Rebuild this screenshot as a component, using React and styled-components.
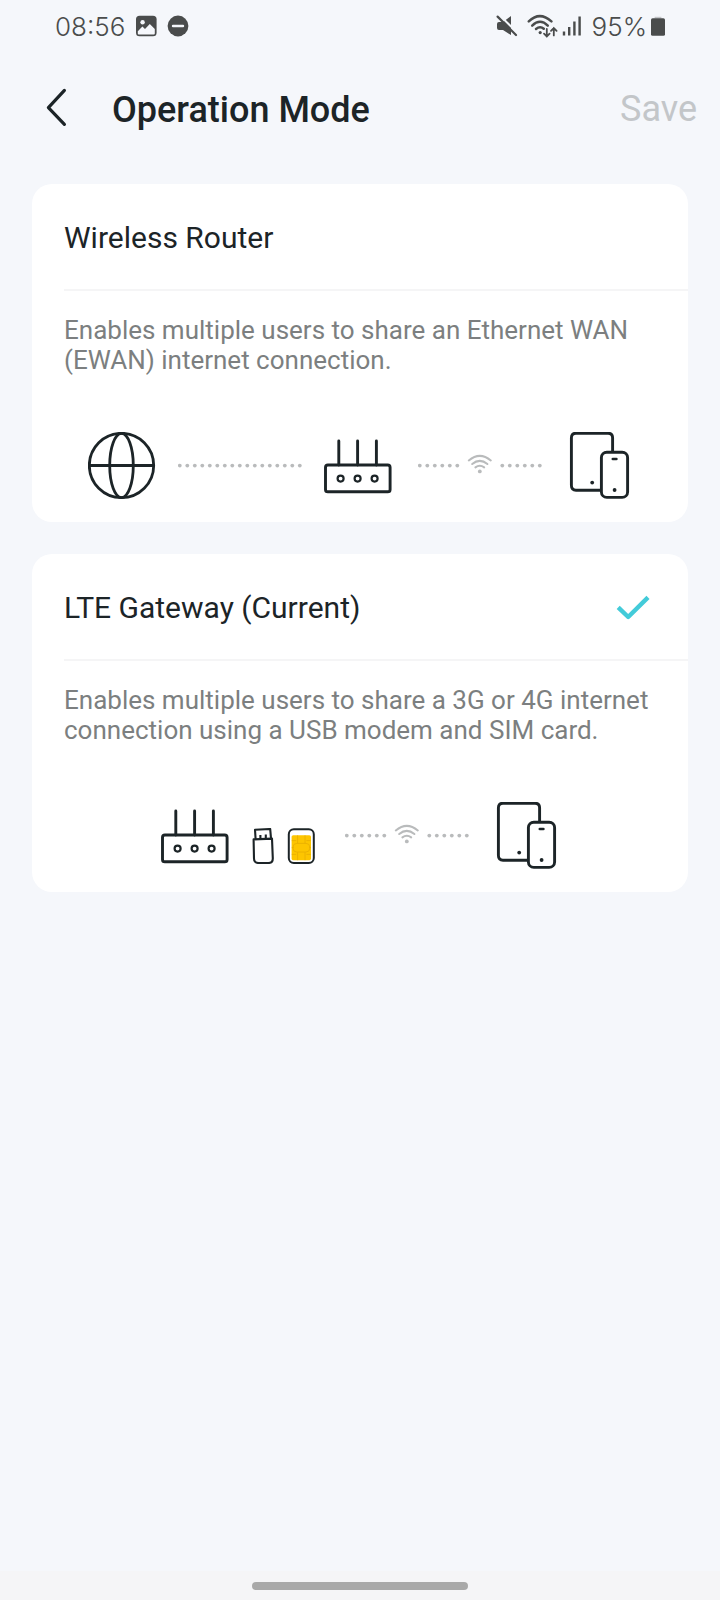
import React from 'react';
import styled, { createGlobalStyle } from 'styled-components';

const GlobalStyle = createGlobalStyle`
  * {
    box-sizing: border-box;
  }

  body {
    margin: 0;
    background: #f5f7fb;
    color: #1c2427;
    font-family: Roboto, "Liberation Sans", sans-serif;
  }

  svg {
    display: block;
    flex-shrink: 0;
  }
`;

const Screen = styled.div`
  display: flex;
  flex-direction: column;
  min-height: 100vh;
`;

const StatusBar = styled.div`
  display: flex;
  justify-content: space-between;
  align-items: center;
  height: 52px;
  padding: 0 54px 0 55px;
  color: #4a4c4c;
  font-family: Inter, Roboto, sans-serif;
  font-size: 26px;
  font-weight: 300;
`;

const StatusGroup = styled.div`
  display: flex;
  align-items: center;
  gap: ${({ $gap }) => $gap}px;
`;

const BatteryLevel = styled.span`
  padding-left: 7px;
`;

const Header = styled.header`
  display: flex;
  align-items: center;
  height: 112px;
  padding: 0 23px 0 40px;
`;

const BackButton = styled.button`
  display: flex;
  align-items: center;
  justify-content: center;
  width: 32px;
  height: 48px;
  padding: 0;
  border: 0;
  background: none;
  color: inherit;
`;

const Title = styled.h1`
  flex: 1;
  margin: 0 0 0 40px;
  padding-top: 4px;
  font-size: 36px;
  line-height: 44px;
  font-weight: 500;
`;

const SaveButton = styled.button`
  padding: 2px 0 0;
  border: 0;
  background: none;
  color: #c3c6c9;
  font-family: inherit;
  font-size: 36px;
  line-height: 44px;
`;

const ModeList = styled.main`
  display: flex;
  flex: 1;
  flex-direction: column;
  gap: 32px;
  padding: 20px 32px;
`;

const Card = styled.section`
  padding-left: 32px;
  border-radius: 20px;
  background: #fff;
`;

const CardHead = styled.div`
  display: flex;
  align-items: center;
  justify-content: space-between;
  height: 107px;
  padding: 2px 38px 0 0;
  border-bottom: 2px solid #f5f5f6;
`;

const ModeName = styled.h2`
  margin: 0;
  font-size: 30px;
  line-height: 36px;
  font-weight: 400;
`;

const Description = styled.p`
  margin: 0;
  padding: 24px 32px 0 0;
  color: #7c7f80;
  font-size: 26px;
  line-height: 30px;
`;

const Diagram = styled.div`
  display: flex;
  align-items: center;
  justify-content: center;
  gap: 22px;
  padding: 57px 32px 22px 0;
`;

const WirelessLink = styled.div`
  padding: 0 5px 0 4px;
`;

const Accessories = styled.div`
  display: flex;
  align-self: flex-end;
  gap: 13px;
  padding: 0 4px 6px 1px;
`;

const NavBar = styled.footer`
  display: flex;
  justify-content: center;
  padding: 11px 0 10px;
  background: #f5f5f7;
`;

const NavHandle = styled.div`
  width: 30%;
  height: 8px;
  border-radius: 4px;
  background: #a9a9a9;
`;

const PictureIcon = () => (
  <svg width="22" height="22" viewBox="0 0 22 22" aria-hidden="true">
    <rect x="1" y="0.7" width="20.6" height="20.6" rx="3.6" fill="currentColor" />
    <circle cx="7.6" cy="7.2" r="2.2" fill="#f5f7fb" />
    <path d="M2.8 16.2 7.4 11.6l2.6 2.4 4.8-5 5 5v4.4q0 1-1 1h-15q-1 0-1-1z" fill="#f5f7fb" />
  </svg>
);

const DoNotDisturbIcon = () => (
  <svg width="22" height="22" viewBox="0 0 22 22" aria-hidden="true">
    <circle cx="11" cy="11" r="10.4" fill="currentColor" />
    <path d="M6 11h10" stroke="#f5f7fb" strokeWidth="2.4" strokeLinecap="round" />
  </svg>
);

const MuteIcon = () => (
  <svg width="28" height="22" viewBox="0 0 28 22" aria-hidden="true">
    <path d="M1 9q0-2 2-2h4l8-6v19l-8-5H3q-2 0-2-2z" fill="currentColor" />
    <path d="M3.4 0 22 18.4" stroke="#f5f7fb" strokeWidth="2" />
    <path d="M1.6 1.6 20 20" stroke="currentColor" strokeWidth="2.2" strokeLinecap="round" />
  </svg>
);

const StatusWifiIcon = () => (
  <svg width="32" height="24" viewBox="0 0 32 24" fill="none" stroke="currentColor" strokeLinecap="round" aria-hidden="true">
    <g strokeWidth="2.5">
      <path d="M1.8 7.4q10.9-10.6 22.6 0" />
      <path d="M5.2 11.6q7.9-7.6 15.6 0" />
      <path d="M9 15q4.1-3.4 7.8-.2" />
    </g>
    <circle cx="13.2" cy="18.6" r="1.6" fill="currentColor" stroke="none" />
    <path d="M19.8 15v7.4m-2.8-2.8 2.8 2.8 2.8-2.8M26.8 21.4v-7.4M24 16.8l2.8-2.8 2.8 2.8" strokeWidth="1.8" />
  </svg>
);

const SignalIcon = () => (
  <svg width="20" height="22" viewBox="0 0 20 22" stroke="currentColor" strokeWidth="2.4" aria-hidden="true">
    <path d="M2 16.6v4M7.2 12v8.6M12.4 6.4v14.2M17.6 1.4v19.2" />
  </svg>
);

const BatteryIcon = () => (
  <svg width="16" height="22" viewBox="0 0 16 22" aria-hidden="true">
    <path d="M4.6 3.4V1.8h6.8v1.6z" fill="#c2c4c7" />
    <rect x="1" y="3.2" width="14" height="17.6" rx="1.6" fill="currentColor" />
  </svg>
);

const ChevronIcon = () => (
  <svg width="24" height="40" viewBox="0 0 24 40" fill="none" stroke="currentColor" strokeWidth="3.2" strokeLinecap="round" strokeLinejoin="round" aria-hidden="true">
    <path d="M20.4 2.4 4.4 19.6l16 16.8" />
  </svg>
);

const CheckIcon = () => (
  <svg width="34" height="26" viewBox="0 0 34 26" fill="none" stroke="#43cbd9" strokeWidth="4.4" strokeLinejoin="round" aria-label="Selected" role="img">
    <path d="M2.2 12.4 12.2 22 32 2.4" />
  </svg>
);

const GlobeIcon = () => (
  <svg width="68" height="68" viewBox="0 0 68 68" fill="none" stroke="currentColor" strokeWidth="2.8" aria-hidden="true">
    <circle cx="33.5" cy="33.5" r="32.2" />
    <ellipse cx="33.5" cy="33.5" rx="11.8" ry="32.2" />
    <path d="M1.2 33.5h64.6" strokeWidth="3" />
  </svg>
);

const RouterIcon = () => (
  <svg width="68" height="68" viewBox="0 0 68 68" fill="none" stroke="currentColor" strokeWidth="2.9" strokeLinecap="round" aria-hidden="true">
    <path d="M14.8 9v24M33.6 9v24M52.4 9v24" />
    <rect x="1.5" y="33" width="64.6" height="26.8" rx="2.4" />
    <circle cx="16.6" cy="46.6" r="3" strokeWidth="2.2" />
    <circle cx="33.6" cy="46.6" r="3" strokeWidth="2.2" />
    <circle cx="50.6" cy="46.6" r="3" strokeWidth="2.2" />
  </svg>
);

const DevicesIcon = () => (
  <svg width="63" height="68" viewBox="0 0 63 68" fill="none" stroke="currentColor" strokeWidth="2.9" aria-hidden="true">
    <path d="M31.4 58.2H7q-4.6 0-4.6-4.6V5.8q0-4.6 4.6-4.6h32q4.6 0 4.6 4.6V20" />
    <rect x="32.4" y="20.2" width="26.2" height="45.2" rx="5.4" />
    <path d="M43.8 27h3.6" strokeWidth="2.6" strokeLinecap="round" />
    <circle cx="23.2" cy="50.6" r="1.9" fill="currentColor" stroke="none" />
    <circle cx="45.6" cy="58" r="1.9" fill="currentColor" stroke="none" />
  </svg>
);

const UsbIcon = () => (
  <svg width="22" height="36" viewBox="0 0 22 36" fill="none" stroke="currentColor" strokeWidth="2.1" strokeLinejoin="round" aria-hidden="true">
    <path d="M3.6 11 3 1.8 18.2 1l.8 9.4" />
    <path d="M1.6 11.4 20 10.6l.8 19.8q0 4.6-4.4 4.6H6.6q-4.6 0-4.6-4.6z" />
    <path d="M8.4 7v3.4M13.8 6.6v3.6" />
  </svg>
);

const SimIcon = () => (
  <svg width="28" height="36" viewBox="0 0 28 36" fill="none" aria-hidden="true">
    <rect x="1.8" y="1.2" width="25" height="33.8" rx="5" stroke="currentColor" strokeWidth="2" />
    <rect x="4.6" y="7.2" width="19.4" height="25" rx="1.6" fill="#fdc500" />
    <path
      d="M10.6 7.4v8M18 7.4v8M10.6 24.2v8M18 24.2v8M4.8 12.6h4.4M19.4 12.6h4.4M4.8 26.4h4.4M19.4 26.4h4.4M4.8 19.6h2M22 19.6h2"
      stroke="#eab000"
      strokeWidth="0.9"
    />
    <rect x="6" y="15.4" width="16.8" height="8.6" rx="3.8" stroke="#eab000" strokeWidth="0.9" />
  </svg>
);

const LINK_DOTS = 17;
const DOT_SPACING = 7.5;

// A dotted line; the wireless one leaves room in the middle for the wave.
const Link = ({ wireless }) => (
  <svg width="124" height="24" viewBox="0 0 124 24" fill="#b9bbbc" aria-hidden="true">
    {Array.from({ length: LINK_DOTS }, (_, index) => index)
      .filter((index) => !wireless || index < 6 || index > 10)
      .map((index) => (
        <circle key={index} cx={1.8 + index * DOT_SPACING} cy="11.6" r="1.9" />
      ))}
    {wireless && (
      <g fill="none" stroke="#b9bbbc" strokeWidth="2" strokeLinecap="round">
        <path d="M50.8 6.4q11-9 22 0" />
        <path d="M54.2 10q7.6-6.2 15.2 0" />
        <path d="M57.4 13.4q4.4-3.4 8.8 0" />
        <circle cx="61.8" cy="17.4" r="1.9" fill="#b9bbbc" stroke="none" />
      </g>
    )}
  </svg>
);

const ModeCard = ({ name, description, current, children }) => (
  <Card>
    <CardHead>
      <ModeName>{name}</ModeName>
      {current && <CheckIcon />}
    </CardHead>
    <Description>{description}</Description>
    <Diagram>{children}</Diagram>
  </Card>
);

const App = () => {
  return (
    <Screen>
      <GlobalStyle />
      <StatusBar>
        <StatusGroup $gap={10}>
          <span>08:56</span>
          <PictureIcon />
          <DoNotDisturbIcon />
        </StatusGroup>
        <StatusGroup $gap={3}>
          <MuteIcon />
          <StatusWifiIcon />
          <SignalIcon />
          <BatteryLevel>95%</BatteryLevel>
          <BatteryIcon />
        </StatusGroup>
      </StatusBar>

      <Header>
        <BackButton type="button" aria-label="Back">
          <ChevronIcon />
        </BackButton>
        <Title>Operation Mode</Title>
        <SaveButton type="button" disabled>Save</SaveButton>
      </Header>

      <ModeList>
        <ModeCard
          name="Wireless Router"
          description="Enables multiple users to share an Ethernet WAN (EWAN) internet connection."
        >
          <GlobeIcon />
          <Link />
          <RouterIcon />
          <WirelessLink>
            <Link wireless />
          </WirelessLink>
          <DevicesIcon />
        </ModeCard>

        <ModeCard
          name="LTE Gateway (Current)"
          description="Enables multiple users to share a 3G or 4G internet connection using a USB modem and SIM card."
          current
        >
          <RouterIcon />
          <Accessories>
            <UsbIcon />
            <SimIcon />
          </Accessories>
          <WirelessLink>
            <Link wireless />
          </WirelessLink>
          <DevicesIcon />
        </ModeCard>
      </ModeList>

      <NavBar>
        <NavHandle />
      </NavBar>
    </Screen>
  );
};

export default App;
